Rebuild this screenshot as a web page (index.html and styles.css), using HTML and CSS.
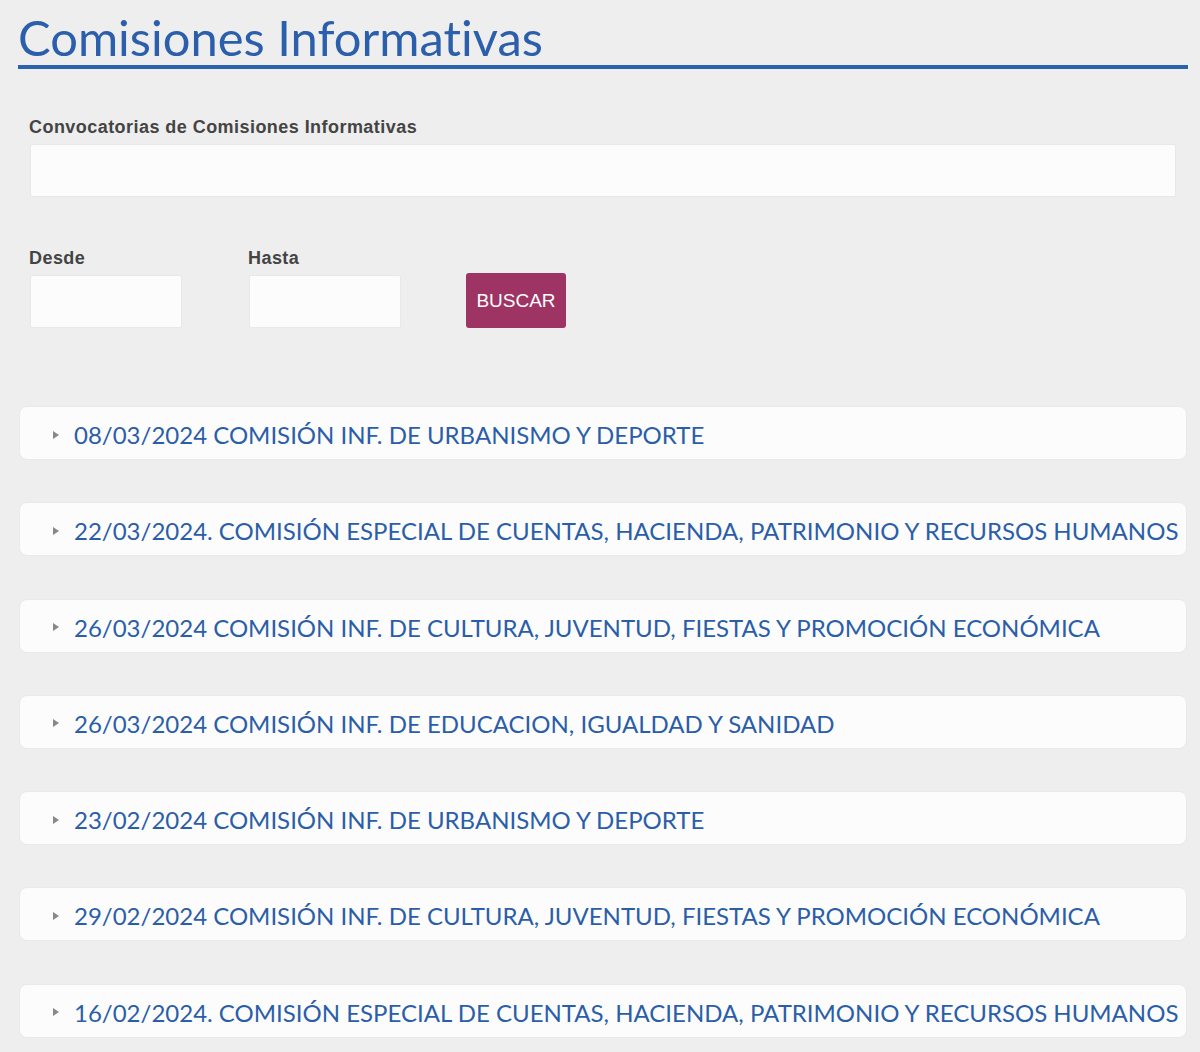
FILE: index.html
```html
<!DOCTYPE html>
<html lang="es">
<head>
<meta charset="utf-8">
<title>Comisiones Informativas</title>
<link rel="stylesheet" href="styles.css">
</head>
<body>
<div class="page">
  <h1 class="title">Comisiones Informativas</h1>

  <form class="search">
    <label class="field-label" for="conv">Convocatorias de Comisiones Informativas</label>
    <input class="text-input wide" id="conv" type="text">

    <div class="dates">
      <div class="date-col">
        <label class="field-label" for="desde">Desde</label>
        <input class="text-input small" id="desde" type="text">
      </div>
      <div class="date-col">
        <label class="field-label" for="hasta">Hasta</label>
        <input class="text-input small" id="hasta" type="text">
      </div>
      <button class="btn" type="button">BUSCAR</button>
    </div>
  </form>

  <div class="list">
    <div class="item"><span class="arrow"></span><span class="item-text">08/03/2024 COMISIÓN INF. DE URBANISMO Y DEPORTE</span></div>
    <div class="item"><span class="arrow"></span><span class="item-text">22/03/2024. COMISIÓN ESPECIAL DE CUENTAS, HACIENDA, PATRIMONIO Y RECURSOS HUMANOS</span></div>
    <div class="item"><span class="arrow"></span><span class="item-text">26/03/2024 COMISIÓN INF. DE CULTURA, JUVENTUD, FIESTAS Y PROMOCIÓN ECONÓMICA</span></div>
    <div class="item"><span class="arrow"></span><span class="item-text">26/03/2024 COMISIÓN INF. DE EDUCACION, IGUALDAD Y SANIDAD</span></div>
    <div class="item"><span class="arrow"></span><span class="item-text">23/02/2024 COMISIÓN INF. DE URBANISMO Y DEPORTE</span></div>
    <div class="item"><span class="arrow"></span><span class="item-text">29/02/2024 COMISIÓN INF. DE CULTURA, JUVENTUD, FIESTAS Y PROMOCIÓN ECONÓMICA</span></div>
    <div class="item"><span class="arrow"></span><span class="item-text">16/02/2024. COMISIÓN ESPECIAL DE CUENTAS, HACIENDA, PATRIMONIO Y RECURSOS HUMANOS</span></div>
  </div>
</div>
</body>
</html>
```

FILE: styles.css
```css
html, body {
  margin: 0;
  padding: 0;
  background: #eeeeee;
}

.page {
  width: 1170px;
  margin-left: 18px;
  font-family: "Liberation Sans", Arial, sans-serif;
}

.title {
  margin: 0;
  padding-top: 11px;
  padding-bottom: 1px;
  font-family: Lato, "Open Sans", sans-serif;
  font-weight: 400;
  font-size: 48.9px;
  line-height: 53px;
  font-variant-ligatures: none;
  color: #2b5fab;
  border-bottom: 4px solid #2b62ad;
}

.search {
  display: flex;
  flex-direction: column;
  padding: 48px 0 0 11px;
  margin: 0;
}

.field-label {
  display: block;
  font-weight: 700;
  font-size: 18px;
  letter-spacing: 0.45px;
  line-height: 20px;
  color: #444444;
}

.text-input {
  box-sizing: border-box;
  height: 53px;
  margin: 7px 0 0 1px;
  background: #fcfcfc;
  border: 1px solid #e8e8e8;
  border-radius: 2px;
  outline: none;
}

.wide {
  width: 1146px;
}

.small {
  width: 152px;
}

.dates {
  display: flex;
  align-items: flex-end;
  margin-top: 51px;
}

.date-col {
  width: 219px;
}

.btn {
  box-sizing: border-box;
  width: 100px;
  height: 55px;
  margin-left: -1px;
  border: none;
  border-radius: 3px;
  background: #9e3464;
  color: #ffffff;
  font-family: "Liberation Sans", Arial, sans-serif;
  font-size: 19px;
  padding: 0;
}

.list {
  display: flex;
  flex-direction: column;
  gap: 42.3px;
  margin-top: 78px;
  margin-left: 1px;
  width: 1168px;
}

.item {
  box-sizing: border-box;
  height: 54px;
  display: flex;
  align-items: center;
  padding: 3px 0 0 33px;
  background: #fcfcfc;
  border: 1px solid #e9e9e9;
  border-radius: 8px;
  white-space: nowrap;
  overflow: hidden;
}

.arrow {
  width: 0;
  height: 0;
  border-top: 4.5px solid transparent;
  border-bottom: 4.5px solid transparent;
  border-left: 6px solid #888888;
  margin-right: 15px;
}

.item-text {
  font-family: Lato, "Open Sans", sans-serif;
  font-size: 24px;
  line-height: 29px;
  color: #2b5ea8;
}
```
